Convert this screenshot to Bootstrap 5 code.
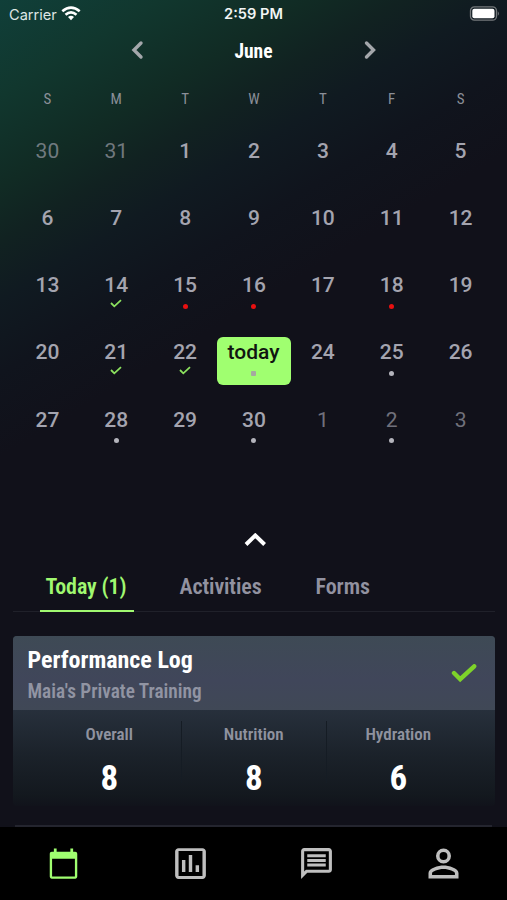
<!DOCTYPE html>
<html lang="en">
<head>
<meta charset="utf-8">
<meta name="viewport" content="width=device-width, initial-scale=1">
<title>Training calendar</title>
<link href="https://cdn.jsdelivr.net/npm/bootstrap@5.3.0/dist/css/bootstrap.min.css" rel="stylesheet">
<style>
  body{height:900px;overflow:hidden;color:#a4a4af;font-family:Roboto,"Liberation Sans",sans-serif;line-height:1;
    background:linear-gradient(149deg,#103f39 0,#11372e 8%,#112b24 15.5%,#112221 20%,#101a21 25%,#10141d 31%,#11111a 38%) #11111a}
  .cond{font-family:"Roboto Condensed",Roboto,sans-serif;font-stretch:75%;white-space:nowrap}
  .status-bar{height:27px;padding:0 7px 0 9px;font-family:Inter,sans-serif;font-size:14.6px;color:#dfe6e5}
  .clock{font-size:14.6px;font-weight:600;color:#f2f5f5;margin-top:1px}
  .month-bar{height:46px}
  .month-name{width:215px;font-size:19.5px;font-weight:700;color:#fff;padding-top:3px}
  .cal{margin:0 12px 0 13px;height:460px}
  .cal-row{display:grid;grid-template-columns:repeat(7,minmax(0,1fr));text-align:center;height:67.25px}
  .cal-row.dow{height:45px;padding-top:19px;font-size:15px;color:#8b8f98}
  .day{font-size:21px;font-weight:500;padding-top:22.5px}
  .day svg,.day i{display:block;margin:0 auto}
  .day i{width:5px;height:5px;border-radius:50%;background:#b4b4bc;margin-top:7.5px}
  .day i.due{background:#e81010}
  .day svg{margin-top:3px}
  .out{font-weight:400;opacity:.65}
  .now{background:#a0ff70;color:#101510;border-radius:6px;width:74px;height:48px;margin:17px auto 0 -3px;padding-top:5.5px}
  .now i{background:#a5aaa0;border-radius:1px}
  .expander{height:24px}
  .tabs{margin:0 12.5px;height:55px;font-size:22px;font-weight:600;letter-spacing:-.1px;border-bottom:1px solid #20212a;color:#9292a0}
  .tabs>div{padding-top:5px}
  .tabs>.tab-on{color:#a0f870;width:94px;padding-top:7px;border-bottom:2px solid #a0f870;margin-left:27px;margin-bottom:-1px}
  .tab-on span{margin-left:-1px}
  .log{margin:24px 12.5px 0;height:170px;border-radius:4px;overflow:hidden;background:linear-gradient(#27303c,#27303c 43%,#1b222a 70%,#13181e 94%,#11131b)}
  .log-head{height:73.500px;padding:4px 18px 0 15px;background:linear-gradient(#3e4a55,#40465a 60%,#404856)}
  .log-title{font-size:24px;font-weight:700;color:#fff}
  .log-sub{font-size:19.3px;font-weight:600;color:#9194a3;margin-top:10px}
  .stats{padding:11px 0 0 1.5px}
  .stat{width:144.5px;height:62px;text-align:center;border-right:1px solid #151c24}
  .stat:last-child{border-color:transparent}
  .stat-name{font-size:17px;font-weight:600;color:#8f929f;padding-top:5px}
  .stat-val{font-size:35px;font-weight:700;color:#fff;margin-top:18px}
  .next-edge{margin:19px 15px 0;height:2px;background:#24252f}
  .bottom-nav{height:74px;background:#000;color:#bfbfbf;padding-bottom:2px}
  .bottom-nav a{flex:1;color:inherit;text-align:center}
  .bottom-nav a.on{color:#a0ff70}
</style>
</head>
<body class="d-flex flex-column">
<header class="status-bar d-flex align-items-center justify-content-between position-relative flex-shrink-0">
  <span class="d-flex align-items-center gap-1 pt-1">Carrier
    <svg class="mb-1" width="20" height="15" viewBox="0 0 20 15" fill="none" stroke="#fff" stroke-width="2.6"><path d="M1.3 5.3Q10-2.2 18.7 5.3M4.5 8.7Q10 4 15.500 8.700"/><path d="M10 14.200 7 10.900Q10 8.400 13 10.900Z" fill="#fff" stroke="none"/></svg></span>
  <span class="clock position-absolute start-50 translate-middle-x">2:59 PM</span>
  <svg width="31" height="15" viewBox="0 0 31 15"><rect x="1.500" y=".8" width="26" height="13.400" rx="4" fill="none" stroke="#74787b" stroke-width="1.300"/><rect x="3.300" y="2.800" width="22.200" height="9.400" rx="2" fill="#fff"/><path d="M28.800 5.200Q31 7.500 28.800 9.800Z" fill="#74787b"/></svg>
</header>
<div class="month-bar d-flex align-items-center justify-content-center flex-shrink-0">
  <svg width="18" height="22" viewBox="0 0 18 22" fill="none" stroke="#a4a7ab" stroke-width="3.400" stroke-linecap="round"><path d="M13 4 6 11l7 7"/></svg>
  <div class="month-name cond text-center">June</div>
  <svg width="18" height="22" viewBox="0 0 18 22" fill="none" stroke="#a4a7ab" stroke-width="3.400" stroke-linecap="round"><path d="m5.500 4 7 7-7 7"/></svg>
</div>
<main class="cal flex-shrink-0" id="calendar"></main>
<div class="expander flex-shrink-0"><svg class="d-block mx-auto" width="26" height="18" viewBox="0 0 26 18" fill="none" stroke="#fff" stroke-width="4"><path d="m5 11.500 9.300-9 9.300 9"/></svg></div>
<nav class="tabs cond d-flex flex-shrink-0">
  <div class="tab-on d-flex align-items-center justify-content-center"><span>Today (1)</span></div>
  <div class="d-flex align-items-center" style="margin-left:46px">Activities</div>
  <div class="d-flex align-items-center" style="margin-left:54px">Forms</div>
</nav>
<section class="log flex-shrink-0">
  <div class="log-head d-flex align-items-center justify-content-between">
    <div class="cond"><div class="log-title">Performance Log</div><div class="log-sub">Maia's Private Training</div></div>
    <svg width="26" height="22" viewBox="0 0 26 22" fill="none" stroke="#7ed32a" stroke-width="4.400" stroke-linecap="round"><path d="m3 9 6.200 6.200L23.200 2.300"/></svg>
  </div>
  <div class="stats d-flex cond justify-content-center">
    <div class="stat"><div class="stat-name">Overall</div><div class="stat-val">8</div></div>
    <div class="stat"><div class="stat-name">Nutrition</div><div class="stat-val">8</div></div>
    <div class="stat"><div class="stat-name">Hydration</div><div class="stat-val">6</div></div>
  </div>
</section>
<div class="next-edge flex-shrink-0"></div>
<nav class="bottom-nav d-flex align-items-center mt-auto flex-shrink-0">
  <a href="#" class="on" aria-label="Calendar"><svg width="33" height="33" viewBox="0 0 24 24" fill="currentColor"><path d="M20.500 3.500H19V1h-2v2.500H7V1H5v2.500H3.500C2.600 3.500 2 4.100 2 5v16.500c0 .9.600 1.500 1.500 1.500h17c.9 0 1.500-.6 1.500-1.500V5c0-.9-.6-1.500-1.500-1.500zM20.300 21.500H3.700V8.500h16.600v13z"/></svg></a>
  <a href="#" aria-label="Statistics"><svg width="41" height="41" viewBox="0 0 24 24" fill="currentColor"><path d="M9 17H7v-7h2v7zm4 0h-2V7h2v10zm4 0h-2v-4h2v4zm2 2.300H5V4.700h14v14.600zm0-16.300H5c-1.100 0-2 .9-2 2v14c0 1.100.9 2 2 2h14c1.100 0 2-.9 2-2V5c0-1.100-.9-2-2-2z"/></svg></a>
  <a href="#" aria-label="Messages"><svg width="37" height="37" viewBox="0 0 24 24" fill="currentColor"><path d="M4 4h16v12H5.170L4 17.170V4m0-2c-1.100 0-1.990.9-1.990 2L2 22l4-4h14c1.100 0 2-.9 2-2V4c0-1.100-.9-2-2-2H4zm2 10h12v2H6v-2zm0-3h12v2H6V9zm0-3h12v2H6V6z"/></svg></a>
  <a href="#" aria-label="Profile"><svg width="45" height="45" viewBox="0 0 24 24" fill="currentColor"><path d="M12 5.900a2.100 2.100 0 1 1 0 4.200 2.100 2.100 0 0 1 0-4.200m0 9c2.970 0 6.100 1.460 6.100 2.100v1.100H5.900V17c0-.64 3.130-2.100 6.100-2.100M12 4a4 4 0 1 0 0 8 4 4 0 0 0 0-8zm0 9c-2.670 0-8 1.340-8 4v3h16v-3c0-2.660-5.330-4-8-4z"/></svg></a>
</nav>
<script src="https://cdn.jsdelivr.net/npm/bootstrap@5.3.0/dist/js/bootstrap.bundle.min.js"></script>
<script>
  const tick = '<svg width="12" height="9" viewBox="0 0 12 9" fill="none" stroke="#8ce25f" stroke-width="1.8"><path d="m1 4 3.300 3.300L11 1.200"/></svg>';
  const dot = '<i></i>', due = '<i class="due"></i>';
  const marks = {14:tick,15:due,16:due,18:due,21:tick,22:tick,23:dot,25:dot,28:dot,30:dot,32:dot};
  let html = '<div class="cal-row dow cond">' + [...'SMTWTFS'].map(d => `<div>${d}</div>`).join('') + '</div>';
  for (let w = 0; w < 5; w++) {
    html += '<div class="cal-row">';
    for (let c = 0; c < 7; c++) {
      const n = w * 7 + c - 1;
      const label = n < 1 ? n + 31 : n > 30 ? n - 30 : n;
      const mark = marks[n] || '';
      html += n === 23 ? `<div><div class="day now">today${mark}</div></div>`
        : `<div class="day"><span class="${n < 1 || n > 30 ? 'out' : ''}">${label}</span>${mark}</div>`;
    }
    html += '</div>';
  }
  document.getElementById('calendar').innerHTML = html;
</script>
</body>
</html>
